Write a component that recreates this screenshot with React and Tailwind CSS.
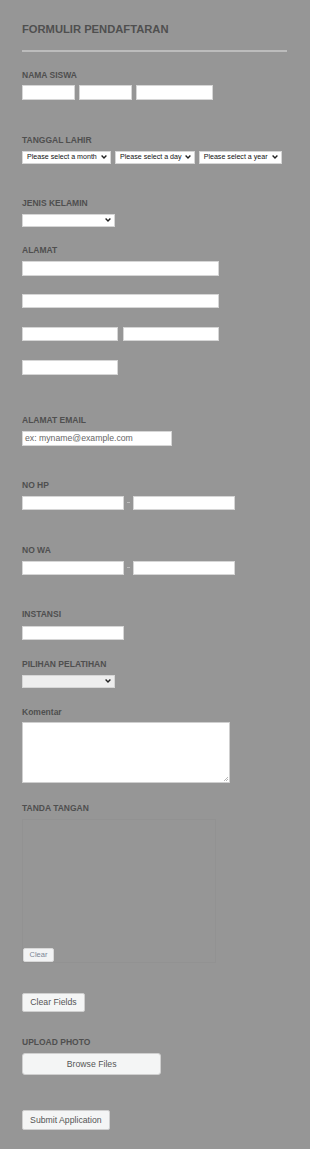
import React from "react";

const F = { fontFamily: '"Liberation Sans", Arial, sans-serif' };

function Label({ children, className = "" }) {
  return (
    <div className={"h-[10px] text-[8.5px] leading-[10px] font-bold text-[#4f4f4f] whitespace-nowrap " + className}>
      {children}
    </div>
  );
}

function Input({ w, className = "", children }) {
  return (
    <div
      className={"h-[14.7px] bg-white border border-[#d6d6d6] box-border flex items-center pl-[2px] text-[8.7px] text-[#666] whitespace-nowrap " + className}
      style={{ width: w }}
    >
      {children}
    </div>
  );
}

function Chevron() {
  return (
    <svg width="6" height="4" viewBox="0 0 6 4" className="shrink-0">
      <path d="M0.6 0.6 L3 3 L5.4 0.6" fill="none" stroke="#222" strokeWidth="1.4" />
    </svg>
  );
}

function Select({ w, text, bg = "bg-white", className = "" }) {
  return (
    <div
      className={"h-[13px] border border-[#d6d6d6] box-border flex items-center justify-between pl-[4px] pr-[3px] text-[7.1px] text-[#111] whitespace-nowrap " + bg + " " + className}
      style={{ width: w }}
    >
      <span>{text}</span>
      <Chevron />
    </div>
  );
}

function Dash() {
  return (
    <div className="w-[9px] flex justify-center items-center">
      <div className="w-[3px] h-[1px] bg-[#bdbdbd]" />
    </div>
  );
}

export default function App() {
  return (
    <div className="w-[310px] min-h-[1149px] bg-[#969696] px-[22px] pt-[22px]" style={F}>
      <div className="h-[14px] text-[11.2px] leading-[14px] font-bold text-[#4f4f4f] whitespace-nowrap">
        FORMULIR PENDAFTARAN
      </div>
      <div className="mt-[14px] h-[2px] w-[265px] bg-[#bcbcbc]" />

      <Label className="mt-[18px]">NAMA SISWA</Label>
      <div className="mt-[5.3px] flex gap-[3.5px]">
        <Input w="53.3px" />
        <Input w="53.3px" />
        <Input w="77.4px" />
      </div>

      <Label className="mt-[34.7px]">TANGGAL LAHIR</Label>
      <div className="mt-[6px] flex gap-[3.7px]">
        <Select w="89.3px" text="Please select a month" />
        <Select w="80px" text="Please select a day" />
        <Select w="83px" text="Please select a year" />
      </div>

      <Label className="mt-[34.3px]">JENIS KELAMIN</Label>
      <Select w="93px" text="" className="mt-[5.7px] h-[13.6px]" />

      <Label className="mt-[18.7px]">ALAMAT</Label>
      <Input w="197px" className="mt-[5.7px]" />
      <Input w="197px" className="mt-[18px]" />
      <div className="mt-[18.4px] flex gap-[4.7px]">
        <Input w="96.3px" />
        <Input w="96px" />
      </div>
      <Input w="96.3px" className="mt-[18.4px]" />

      <Label className="mt-[40.7px]">ALAMAT EMAIL</Label>
      <Input w="150.3px" className="mt-[5.7px]">ex: myname@example.com</Input>

      <Label className="mt-[34.4px]">NO HP</Label>
      <div className="mt-[5.6px] flex items-center">
        <Input w="102px" />
        <Dash />
        <Input w="101.7px" />
      </div>

      <Label className="mt-[34.6px]">NO WA</Label>
      <div className="mt-[5.7px] flex items-center">
        <Input w="102px" />
        <Dash />
        <Input w="101.7px" />
      </div>

      <Label className="mt-[34px]">INSTANSI</Label>
      <Input w="102px" className="mt-[6.3px]" />

      <Label className="mt-[18.3px]">PILIHAN PELATIHAN</Label>
      <Select w="93px" text="" bg="bg-[#eeeeee]" className="mt-[6px] h-[13.3px]" />

      <Label className="mt-[19px]">Komentar</Label>
      <div className="mt-[5.4px] relative w-[208.3px] h-[61px] bg-white border border-[#cfcfcf] box-border">
        <svg width="5" height="5" viewBox="0 0 5 5" className="absolute right-[1px] bottom-[1px]">
          <path d="M1 5 L5 1 M3 5 L5 3" stroke="#999" strokeWidth="0.7" />
        </svg>
      </div>

      <Label className="mt-[20.3px]">TANDA TANGAN</Label>
      <div className="mt-[6px] relative w-[193.5px] h-[143.3px] border border-[#929292] box-border">
        <div className="absolute left-0 bottom-0 w-[31px] h-[14px] bg-[#f2f3f4] border border-[#d8d8d8] rounded-[2px] box-border flex items-center justify-center text-[7.5px] text-[#7b8696] leading-none">
          Clear
        </div>
      </div>

      <div className="mt-[30px] w-[63px] h-[19.4px] bg-[#f4f5f5] border border-[#cfcfcf] rounded-[2px] box-border flex items-center justify-center text-[8.7px] text-[#555] leading-none whitespace-nowrap">
        Clear Fields
      </div>

      <Label className="mt-[24.6px]">UPLOAD PHOTO</Label>
      <div className="mt-[6.7px] w-[139.3px] h-[21.7px] bg-[#f4f5f5] border border-[#cfcfcf] rounded-[3px] box-border flex items-center justify-center text-[8.7px] text-[#555] leading-none">
        Browse Files
      </div>

      <div className="mt-[35.3px] w-[87.7px] h-[19.7px] bg-[#f4f5f5] border border-[#cfcfcf] rounded-[2px] box-border flex items-center justify-center text-[8.7px] text-[#555] leading-none whitespace-nowrap">
        Submit Application
      </div>
    </div>
  );
}
